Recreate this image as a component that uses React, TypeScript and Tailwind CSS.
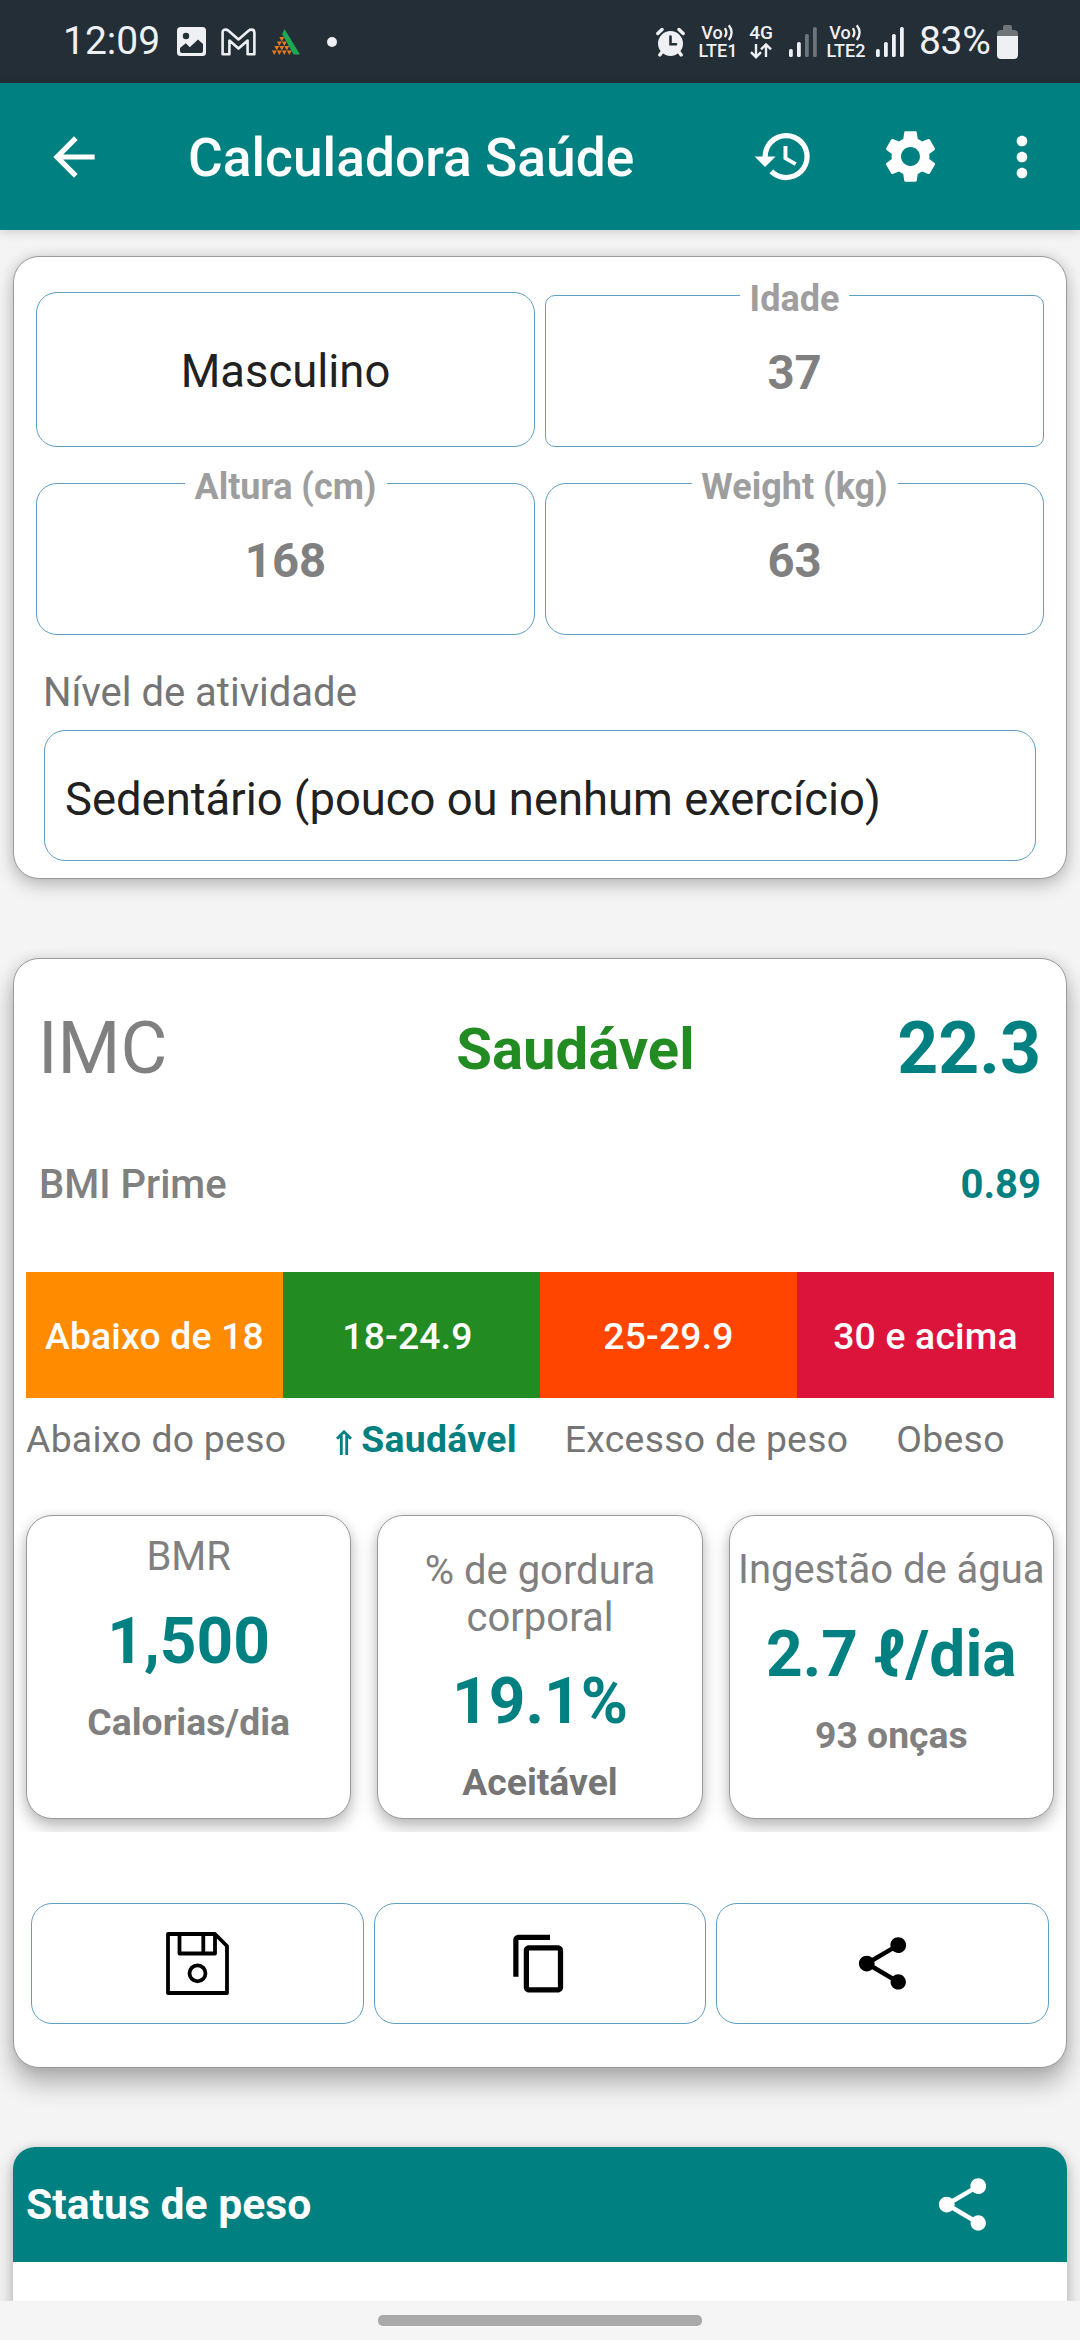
import type { ReactNode } from "react"
import {
  MdArrowBack,
  MdContentCopy,
  MdHistory,
  MdMoreVert,
  MdSettings,
  MdShare,
} from "react-icons/md"

type FieldProps = {
  label: string
  value: string
  className: string
}

type MetricProps = {
  title: string
  value: string
  note: string
  className: string
  noteClassName?: string
}

const ranges = [
  { text: "Abaixo de 18", className: "bg-[#ff8c00]" },
  { text: "18-24.9", className: "bg-[#228b22] pr-2" },
  { text: "25-29.9", className: "bg-[#ff4500]" },
  { text: "30 e acima", className: "bg-[#dc143c]" },
]

function AlarmIcon() {
  return (
    <svg width="29" height="30" viewBox="0 0 29 30" fill="none" stroke="#eef0f3" strokeLinecap="round">
      <circle cx="14.5" cy="16.5" r="12.5" fill="#eef0f3" stroke="none" />
      <path d="M1.8 6.5 6 2.5M27.2 6.5 23 2.5" strokeWidth="3.4" />
      <path d="M6 25 3.8 28M23 25l2.2 3" strokeWidth="3.4" />
      <path d="M14.5 9.5v7.8H20" stroke="#242e37" strokeWidth="2.6" />
    </svg>
  )
}

function ImageIcon() {
  return (
    <svg width="29" height="29" viewBox="0 0 29 29">
      <rect width="29" height="29" rx="3.5" fill="#eef0f3" />
      <circle cx="9" cy="9" r="3.2" fill="#242e37" />
      <path d="M3 21 8.8 16.2l4 4L21 12.5 26 17v7q0 2-2 2H5q-2 0-2-2Z" fill="#242e37" />
    </svg>
  )
}

function MailIcon() {
  return (
    <svg width="35" height="28" viewBox="0 0 35 28" fill="none" stroke="#eef0f3" strokeWidth="2.6" strokeLinejoin="round">
      <path d="M1.6 4.5Q1.6 1.6 4.6 1.6q1.4 0 2.6 1L17.5 11.5 27.8 2.6q1.2-1 2.6-1 3 0 3 2.9V26.2H26.6V12.6L17.5 20.6 8.4 12.6V26.2H1.6Z" />
    </svg>
  )
}

function TriangleIcon() {
  return (
    <svg width="28" height="26" viewBox="0 0 28 26">
      <path d="M12.5 0 28 25.5H21.5L10.2 5Z" fill="#1da851" />
      {[0, 1, 2, 3].map((row) =>
        Array.from({ length: row + 1 }, (_, i) => {
          const x = 7.4 - row * 2.5 + i * 5
          const y = 8 + row * 4.5
          return <path key={`${row}-${i}`} d={`M${x} ${y}h4.8l-2.4 4.4Z`} fill="#e8791c" />
        }),
      )}
    </svg>
  )
}

function Signal({ level }: { level: number }) {
  const tops = [22, 15, 7, 0]
  return (
    <svg width="28" height="30" viewBox="0 0 28 30">
      {tops.map((top, i) => (
        <rect
          key={top}
          x={i * 8}
          y={top}
          width="3.8"
          height={30 - top}
          rx="1.6"
          fill={i < level ? "#eef0f3" : "#6d747a"}
        />
      ))}
    </svg>
  )
}

function VoLte({ sim, className }: { sim: string; className: string }) {
  return (
    <div className={`flex shrink-0 flex-col items-center text-[18px] leading-[18px] font-medium ${className}`}>
      <div className="flex items-center">
        Vo
        <svg width="11" height="17" viewBox="0 0 11 17" fill="none" stroke="#eef0f3" strokeWidth="2.3" className="ml-px">
          <path d="M.8 4.2Q4 8.5.8 13M4.8 1.2Q10.4 8.5 4.8 16" />
        </svg>
      </div>
      <div>LTE{sim}</div>
    </div>
  )
}

function BatteryIcon() {
  return (
    <svg width="21" height="34" viewBox="0 0 21 34" className="ml-[6px] shrink-0">
      <path d="M6 2q0-2 2-2h5q2 0 2 2v3h2q4 0 4 4v3H0V9q0-4 4-4h2Z" fill="#6d747a" />
      <path d="M0 11h21v19q0 4-4 4H4q-4 0-4-4Z" fill="#eef0f3" />
    </svg>
  )
}

function SaveIcon() {
  return (
    <svg width="63" height="63" viewBox="0 0 63 63" fill="none" stroke="#000" strokeWidth="3.8" strokeLinejoin="round">
      <path d="M2 2h47l12 12v47H2Z" />
      <path d="M13.5 2v19.5H49V2M37.3 2v19.5" />
      <circle cx="31.5" cy="41.3" r="8" />
    </svg>
  )
}

function StatusBar() {
  return (
    <div className="flex h-[83px] shrink-0 items-center bg-[#242e37] pl-[63px] text-[#eef0f3]">
      <span className="w-[98px] text-[39px] leading-none">12:09</span>
      <div className="ml-4 flex items-center">
        <ImageIcon />
        <div className="ml-[15px]">
          <MailIcon />
        </div>
        <div className="ml-4">
          <TriangleIcon />
        </div>
        <div className="ml-[27px] size-[10px] rounded-full bg-[#eef0f3]" />
      </div>
      <div className="ml-auto flex items-center pr-[62px]">
        <AlarmIcon />
        <VoLte sim="1" className="ml-[14px] w-[38px]" />
        <div className="ml-[12px] flex w-6 flex-col items-center text-[19px] leading-[18px] font-medium">
          4G
          <svg width="22" height="18" viewBox="0 0 22 18" fill="none" stroke="#eef0f3" strokeWidth="2.4">
            <path d="M6 2v13M1 10.2 6 15.2 11 10.2M16 15V3M11 7.4 16 2.4 21 7.4" />
          </svg>
        </div>
        <div className="ml-4">
          <Signal level={2} />
        </div>
        <VoLte sim="2" className="ml-[9px] w-10" />
        <div className="ml-[10px]">
          <Signal level={4} />
        </div>
        <span className="ml-[15px] w-[72px] text-[39px] leading-none tracking-[-0.3px]">83%</span>
        <BatteryIcon />
      </div>
    </div>
  )
}

function Header() {
  return (
    <header className="relative z-10 flex h-[147px] shrink-0 items-center bg-[#008080] pr-[26px] pl-[43px] text-white shadow-[0_2px_10px_rgba(0,0,0,0.16)]">
      <MdArrowBack size={62} />
      <h1 className="ml-[83px] pt-[4px] text-[53.3px] leading-none font-medium">Calculadora Saúde</h1>
      <div className="ml-auto flex items-center">
        <MdHistory size={63} />
        <MdSettings size={63} className="ml-[64px]" />
        <MdMoreVert size={64} className="ml-[48px]" />
      </div>
    </header>
  )
}

function Field({ label, value, className }: FieldProps) {
  return (
    <div className={`relative flex items-center justify-center border border-[#5f9fc2] pt-[6px] ${className}`}>
      <span className="absolute top-[-15px] left-1/2 -translate-x-1/2 bg-white px-[10px] text-[36px] leading-[36px] font-bold whitespace-nowrap text-[#9e9e9e]">
        {label}
      </span>
      <span className="text-[47.25px] leading-none font-bold text-[#808080]">{value}</span>
    </div>
  )
}

function Metric({ title, value, note, className, noteClassName = "text-[#808080]" }: MetricProps) {
  return (
    <div
      className={`flex h-[304px] flex-col items-center rounded-[26px] border border-[#9a9a9a] bg-white text-center shadow-[0_8px_16px_rgba(0,0,0,0.26),0_0_10px_rgba(0,0,0,0.07)] ${className}`}
    >
      <p className="text-[40px] leading-[46.5px] whitespace-pre text-[#808080]">{title}</p>
      <p className="mt-[24px] text-[64px] leading-[74px] font-bold whitespace-nowrap text-[#008080]">{value}</p>
      <p className={`mt-[22px] text-[37.3px] leading-[43px] font-bold ${noteClassName}`}>{note}</p>
    </div>
  )
}

function ActionButton({ children }: { children: ReactNode }) {
  return (
    <button className="flex h-[121px] items-center justify-center rounded-[21px] border border-[#5f9fc2] text-black">
      {children}
    </button>
  )
}

function InputCard() {
  return (
    <section className="h-[623px] shrink-0 rounded-[26px] border border-[#9a9a9a] bg-white px-[22px] pt-[35px] shadow-[0_7px_18px_rgba(0,0,0,0.2),0_0_14px_rgba(0,0,0,0.1)]">
      <div className="grid grid-cols-2 gap-x-[10px]">
        <div className="flex h-[155px] items-center justify-center rounded-[21px] border border-[#5f9fc2] pt-[5px] text-[45.4px] text-[#212121]">
          Masculino
        </div>
        <Field label="Idade" value="37" className="mt-[3px] h-[152px] rounded-[10px]" />
        <Field label="Altura (cm)" value="168" className="mt-9 h-[152px] rounded-[21px]" />
        <Field label="Weight (kg)" value="63" className="mt-9 h-[152px] rounded-[21px]" />
      </div>
      <p className="mt-[35px] ml-[7px] text-[40px] leading-[46px] text-[#757575]">Nível de atividade</p>
      <div className="mx-[8px] mt-[14px] flex h-[131px] items-center rounded-[21px] border border-[#5f9fc2] pt-[10px] pl-[20px] text-[45.4px] text-[#212121]">
        Sedentário (pouco ou nenhum exercício)
      </div>
    </section>
  )
}

function ResultCard() {
  return (
    <section className="mt-[79px] h-[1110px] shrink-0 rounded-[26px] border border-[#9a9a9a] bg-white pt-12 shadow-[0_16px_24px_rgba(0,0,0,0.27),0_0_14px_rgba(0,0,0,0.12)]">
      <div className="flex h-[84px] items-center pr-[25px] pl-[24px]">
        <span className="text-[72px] text-[#808080]">IMC</span>
        <span className="ml-[289px] text-[58px] font-bold text-[#228b22]">Saudável</span>
        <span className="ml-auto text-[71.5px] font-bold text-[#008080]">22.3</span>
      </div>
      <div className="mt-[71px] flex items-center justify-between pr-[25px] pl-[25px] text-[40px] leading-[46px]">
        <span className="font-medium text-[#808080]">BMI Prime</span>
        <span className="font-bold text-[#008080]">0.89</span>
      </div>

      <div className="mx-3 mt-16 grid h-[126px] grid-cols-4">
        {ranges.map((range) => (
          <div
            key={range.text}
            className={`flex items-center justify-center pt-1 text-[37.3px] font-medium tracking-[0.2px] whitespace-nowrap text-white ${range.className}`}
          >
            {range.text}
          </div>
        ))}
      </div>
      <div className="mt-5 ml-3 flex gap-[48px] text-[37.3px] leading-[43px] tracking-[0.3px] whitespace-nowrap text-[#757575]">
        <span>Abaixo do peso</span>
        <span className="flex items-center font-bold text-[#008080]">
          <svg width="16" height="25" viewBox="0 0 16 25" fill="none" stroke="#008080" strokeWidth="2.8" className="mt-[5px] mr-[9px] ml-[2px]">
            <path d="M1 8.8 8 1.8 15 8.8M5.3 4.5V25M10.7 4.5V25" />
          </svg>
          Saudável
        </span>
        <span>Excesso de peso</span>
        <span>Obeso</span>
      </div>

      {/* shadows are cut off at the row's edge */}
      <div className="mt-[39px] grid h-[332px] grid-cols-3 gap-[26px] overflow-hidden px-3 pt-[15px]">
        <Metric title="BMR" value="1,500" note="Calorias/dia" className="pt-[18px]" />
        <Metric
          title={"% de gordura\ncorporal"}
          value="19.1%"
          note="Aceitável"
          className="pt-[32px]"
          noteClassName="text-[#757575]"
        />
        <Metric title="Ingestão de água" value="2.7 ℓ/dia" note="93 onças" className="pt-[31px]" />
      </div>

      <div className="mx-[17px] mt-[71px] grid grid-cols-3 gap-[10px]">
        <ActionButton>
          <SaveIcon />
        </ActionButton>
        <ActionButton>
          <MdContentCopy size={63} />
        </ActionButton>
        <ActionButton>
          <MdShare size={63} />
        </ActionButton>
      </div>
    </section>
  )
}

function WeightCard() {
  return (
    <section className="mt-[79px] h-[400px] shrink-0 overflow-hidden rounded-[22px] bg-white shadow-[0_8px_18px_rgba(0,0,0,0.25),0_0_8px_rgba(0,0,0,0.1)]">
      <div className="flex h-[115px] items-center bg-[#008080] pr-[73px] pl-[13px] text-white">
        <h2 className="text-[42.7px] leading-none font-bold">Status de peso</h2>
        <MdShare size={63} className="ml-auto" />
      </div>
    </section>
  )
}

function App() {
  return (
    <div className="flex h-[2340px] w-[1080px] flex-col overflow-hidden bg-[#f4f4f4] font-['Roboto',sans-serif]">
      <StatusBar />
      <Header />
      <main className="flex h-[2071px] shrink-0 flex-col overflow-hidden px-[13px] pt-[26px]">
        <InputCard />
        <ResultCard />
        <WeightCard />
      </main>
      <div className="flex h-[39px] shrink-0 justify-center bg-[#f5f5f5] pt-[14px]">
        <div className="h-[11px] w-[324px] rounded-[5px] bg-[#a9a9a9]" />
      </div>
    </div>
  )
}

export default App
